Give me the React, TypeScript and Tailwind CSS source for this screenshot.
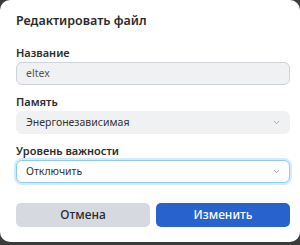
import { ChevronDown } from 'lucide-react'

function Label({ children }: { children: React.ReactNode }) {
  return <div className="text-[11px] font-semibold leading-[12px] text-[#2d2d2d] mb-[3px]">{children}</div>
}

function SelectBox({ value, focused }: { value: string; focused?: boolean }) {
  return (
    <div
      className={
        focused
          ? 'h-[23px] rounded-[6px] border border-[#8ecbf3] ring-2 ring-[#d3ebfb] bg-white flex items-center justify-between pl-[9px] pr-[8px]'
          : 'h-[23px] rounded-[6px] bg-[#f0f1f3] flex items-center justify-between pl-[10px] pr-[9px]'
      }
    >
      <span className="text-[10.5px] text-[#333]">{value}</span>
      <ChevronDown className="w-[9px] h-[9px] text-[#9aa0a8]" strokeWidth={2.5} />
    </div>
  )
}

export default function App() {
  return (
    <div className="w-[300px] h-[245px] bg-[#3b3b3b] overflow-hidden" style={{ fontFamily: '"Noto Sans", "Open Sans", sans-serif' }}>
      <div className="w-[300px] h-[242px] bg-white rounded-[10px] px-[16px] pt-[13px]">
        <h2 className="text-[12.5px] font-semibold text-[#2b2b2b] leading-[16px]">Редактировать файл</h2>

        <div className="mt-[18px] w-[274px]">
          <Label>Название</Label>
          <div className="h-[23px] rounded-[6px] border border-[#cfd2d6] bg-[#f0f1f3] flex items-center pl-[9px]">
            <span className="text-[10.5px] text-[#555]">eltex</span>
          </div>
        </div>

        <div className="mt-[11px] w-[274px]">
          <Label>Память</Label>
          <SelectBox value="Энергонезависимая" />
        </div>

        <div className="mt-[11px] w-[274px]">
          <Label>Уровень важности</Label>
          <SelectBox value="Отключить" focused />
        </div>

        <div className="mt-[20px] w-[274px] flex gap-[6px]">
          <button className="flex-1 h-[24px] rounded-[5px] bg-[#d6dae0] text-[12px] font-medium text-[#2b2b2b]">Отмена</button>
          <button className="flex-1 h-[24px] rounded-[5px] bg-[#2862cc] text-[12px] font-medium text-white">Изменить</button>
        </div>
      </div>
    </div>
  )
}
